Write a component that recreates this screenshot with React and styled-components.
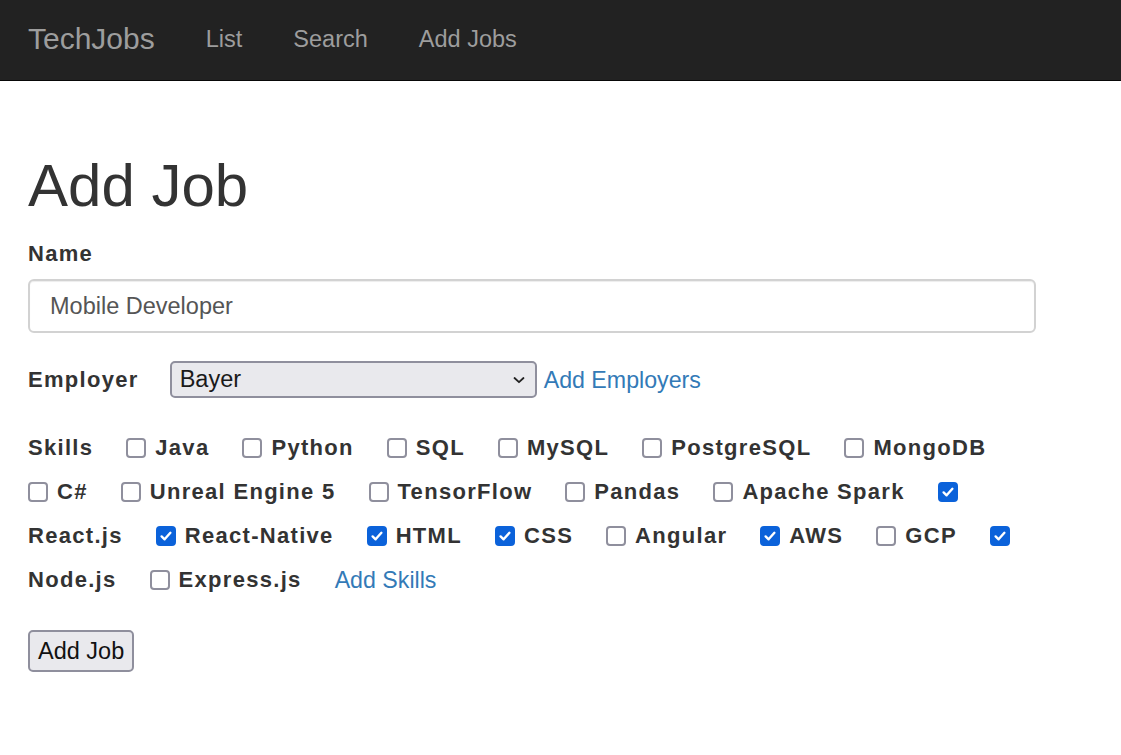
import React from "react";
import styled, { createGlobalStyle } from "styled-components";

const GlobalStyle = createGlobalStyle`
  body {
    margin: 0;
    background: #fff;
    color: #333;
    font-family: "Liberation Sans", Arial, Helvetica, sans-serif;
  }
`;

const Navbar = styled.nav`
  display: flex;
  align-items: center;
  height: 81px;
  padding: 0 0 2px 28px;
  box-sizing: border-box;
  background: #222;
  border-bottom: 1px solid #080808;
`;

const Brand = styled.a`
  font-size: 30px;
  color: #9d9d9d;
  text-decoration: none;
  margin-right: 51px;
`;

const NavLink = styled.a`
  font-size: 23.5px;
  color: #9d9d9d;
  text-decoration: none;
  margin-right: 51px;
`;

const Main = styled.main`
  width: 1008px;
  padding: 72px 0 0 28px;
`;

const Title = styled.h1`
  margin: 0;
  font-size: 60px;
  font-weight: 400;
  line-height: 66px;
  color: #333;
`;

const Label = styled.label`
  display: block;
  font-size: 22px;
  font-weight: 700;
  letter-spacing: 1.3px;
  line-height: 30px;
  margin-top: 20px;
  color: #333;
`;

const TextInput = styled.input`
  display: block;
  box-sizing: border-box;
  width: 100%;
  height: 54px;
  margin: 10px 0 0;
  padding: 0 20px;
  border: 2px solid #d2d2d2;
  border-radius: 6px;
  box-shadow: inset 0 1px 1px rgba(0, 0, 0, 0.075);
  font-family: inherit;
  font-size: 23.5px;
  color: #555;
  outline: none;
`;

const Row = styled.div`
  display: flex;
  align-items: center;
  height: 37px;
  margin-top: 28px;
`;

const InlineLabel = styled.span`
  font-size: 22px;
  font-weight: 700;
  letter-spacing: 1.3px;
  line-height: 44px;
  color: #333;
  margin-right: ${({ $gap }) => $gap ?? 33}px;
`;

const SelectBox = styled.div`
  display: flex;
  align-items: center;
  justify-content: space-between;
  box-sizing: border-box;
  width: 367px;
  height: 37px;
  padding: 0 9px 0 8px;
  background: #e9e9ed;
  border: 2px solid #8f8f9d;
  border-radius: 5px;
  font-size: 23.5px;
  color: #1a1a1a;
`;

const TextLink = styled.a`
  font-size: 23.2px;
  line-height: 44px;
  color: #337ab7;
  text-decoration: none;
  margin-left: ${({ $ml }) => $ml ?? 0}px;
`;

const Skills = styled.div`
  display: flex;
  flex-wrap: wrap;
  align-items: center;
  margin-top: 28px;
`;

const Box = styled.span`
  display: inline-flex;
  align-items: center;
  justify-content: center;
  box-sizing: border-box;
  width: 20px;
  height: 20px;
  margin-right: 9px;
  border-radius: 4px;
  border: 2px solid ${({ $checked }) => ($checked ? "#0b62da" : "#8f8f9d")};
  background: ${({ $checked }) => ($checked ? "#0b62da" : "#fff")};
`;

const SubmitButton = styled.button`
  display: block;
  margin-top: 28px;
  height: 42px;
  padding: 0 8px;
  background: #e9e9ed;
  border: 2px solid #8f8f9d;
  border-radius: 5px;
  font-family: inherit;
  font-size: 23.5px;
  color: #111;
`;

const Checkbox = ({ checked }) => (
  <Box $checked={checked}>
    {checked && (
      <svg width="14" height="14" viewBox="0 0 14 14">
        <path
          d="M2.6 7.4 L5.6 10.3 L11.4 3.8"
          fill="none"
          stroke="#fff"
          strokeWidth="2.4"
          strokeLinecap="round"
          strokeLinejoin="round"
        />
      </svg>
    )}
  </Box>
);

const skills = [
  ["Java", false],
  ["Python", false],
  ["SQL", false],
  ["MySQL", false],
  ["PostgreSQL", false],
  ["MongoDB", false],
  ["C#", false],
  ["Unreal Engine 5", false],
  ["TensorFlow", false],
  ["Pandas", false],
  ["Apache Spark", false],
  ["React.js", true],
  ["React-Native", true],
  ["HTML", true],
  ["CSS", true],
  ["Angular", false],
  ["AWS", true],
  ["GCP", false],
  ["Node.js", true],
  ["Express.js", false],
];

export default function App() {
  return (
    <>
      <GlobalStyle />
      <Navbar>
        <Brand>TechJobs</Brand>
        <NavLink>List</NavLink>
        <NavLink>Search</NavLink>
        <NavLink>Add Jobs</NavLink>
      </Navbar>
      <Main>
        <Title>Add Job</Title>
        <Label>Name</Label>
        <TextInput defaultValue="Mobile Developer" />
        <Row>
          <InlineLabel $gap={31}>Employer</InlineLabel>
          <SelectBox>
            <span>Bayer</span>
            <svg width="14" height="10" viewBox="0 0 14 10">
              <path
                d="M2.5 3 L7 7.2 L11.5 3"
                fill="none"
                stroke="#222"
                strokeWidth="1.8"
                strokeLinecap="round"
                strokeLinejoin="round"
              />
            </svg>
          </SelectBox>
          <TextLink $ml={7}>Add Employers</TextLink>
        </Row>
        <Skills>
          <InlineLabel>Skills</InlineLabel>
          {skills.map(([name, checked]) => (
            <React.Fragment key={name}>
              <Checkbox checked={checked} />
              <InlineLabel>{name}</InlineLabel>
            </React.Fragment>
          ))}
          <TextLink>Add Skills</TextLink>
        </Skills>
        <SubmitButton>Add Job</SubmitButton>
      </Main>
    </>
  );
}
